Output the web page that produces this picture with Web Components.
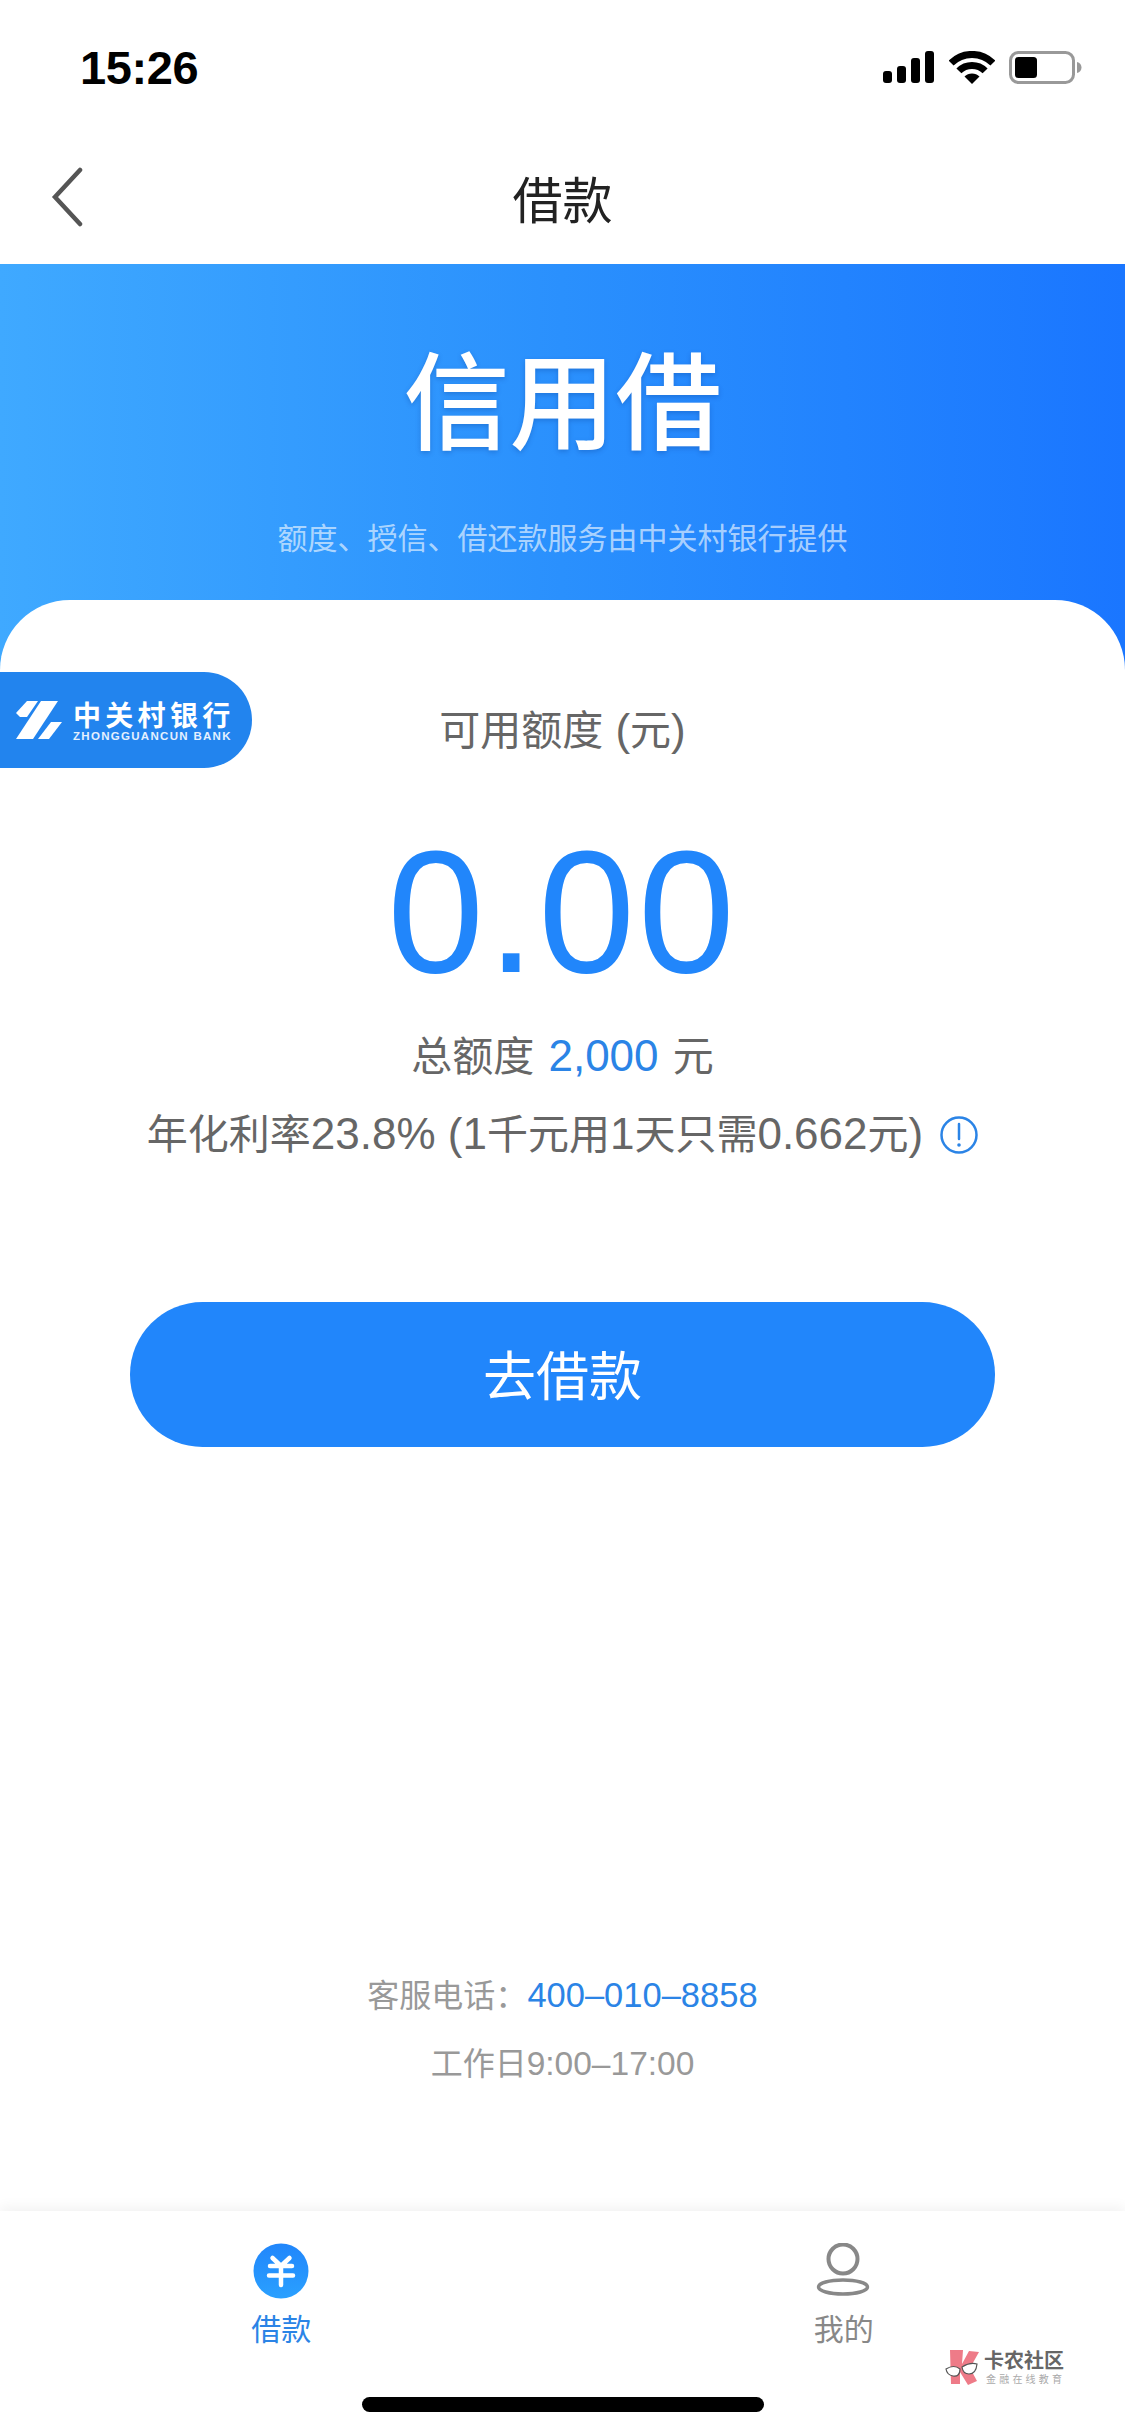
<!doctype html>
<html lang="zh-CN"><head><meta charset="utf-8"><title>借款</title>
<style>
html,body{margin:0;padding:0;background:#fff}
body{width:1125px;height:2436px;overflow:hidden;font-family:"Liberation Sans","Noto Sans CJK SC",sans-serif}
app-shell{font-family:"Liberation Sans","Noto Sans CJK SC",sans-serif}
</style></head><body>
<app-shell>
  <status-bar></status-bar>
  <nav-bar>借款</nav-bar>
  <hero-banner></hero-banner>
  <credit-panel></credit-panel>
  <tab-bar></tab-bar>
  <kanong-mark></kanong-mark>
</app-shell>
<script>
function def(name, html){
  customElements.define(name, class extends HTMLElement{
    constructor(){super();const r=this.attachShadow({mode:'open'});r.innerHTML=html;}
  });
}
def('app-shell',`<style>:host{display:flex;flex-direction:column;width:1125px;height:2436px;position:relative;overflow:hidden;background:#fff}</style><slot></slot>`);

def('status-bar',`<style>
:host{display:flex;height:130px;box-sizing:border-box;padding:45px 43px 0 80px;justify-content:space-between;align-items:flex-start;background:#fff}
.t{font:700 47px/46px "Liberation Sans",sans-serif;color:#000;letter-spacing:-.4px}
.i{display:flex;align-items:center;height:46px;gap:14px;margin-top:-1px}
svg{display:block}
</style>
<div class="t">15:26</div>
<div class="i">
<svg width="51" height="33" viewBox="0 0 51 33"><g fill="#000"><rect x="0" y="20" width="9" height="12" rx="3"/><rect x="14" y="15" width="9" height="17" rx="3"/><rect x="28" y="7" width="9" height="25" rx="3"/><rect x="42" y="0" width="9" height="32" rx="3"/></g></svg>
<svg width="46" height="33" viewBox="0 0 46 33" style="margin-left:1px"><path d="M2.100 12.100A29.500 29.500 0 0 1 43.900 12.100" fill="none" stroke="#000" stroke-width="7"/><path d="M9.900 19.900A18.500 18.500 0 0 1 36.100 19.900" fill="none" stroke="#000" stroke-width="7"/><path d="M23 33L15.500 25.500A10.600 10.600 0 0 1 30.500 25.500Z" fill="#000"/></svg>
<svg width="73" height="33" viewBox="0 0 73 33"><rect x="1.500" y="1.500" width="63" height="30" rx="8" fill="none" stroke="#999" stroke-width="3"/><rect x="6" y="6" width="22" height="21" rx="3.500" fill="#000"/><path d="M68 11c3 .5 4.500 3 4.500 5.500S71 21.500 68 22Z" fill="#999"/></svg>
</div>`);

def('nav-bar',`<style>
:host{display:flex;position:relative;height:134px;align-items:center;justify-content:center;background:#fff;font:400 50px/60px "Noto Sans CJK SC",sans-serif;color:#222}
svg{position:absolute;left:50px;top:37px}
</style>
<svg width="34" height="60" viewBox="0 0 34 60"><path d="M30 3L5 30l25 27" fill="none" stroke="#555" stroke-width="4.500" stroke-linecap="round" stroke-linejoin="miter"/></svg>
<slot></slot>`);

def('hero-banner',`<style>
:host{display:flex;flex-direction:column;align-items:center;height:406px;box-sizing:border-box;padding-top:76px;background:linear-gradient(90deg,#3fa9ff 0%,#2a90fd 50%,#1a76ff 100%);flex:none}
.logo{font:500 106px/110px "Noto Sans CJK SC",sans-serif;color:#fff;text-shadow:0 2px 5px rgba(0,40,120,.25)}
.sub{margin-top:66px;font:400 30px/40px "Noto Sans CJK SC",sans-serif;color:rgba(255,255,255,.62)}
</style>
<div class="logo">信用借</div>
<div class="sub">额度、授信、借还款服务由中关村银行提供</div>`);

def('bank-badge',`<style>
:host{display:flex;position:absolute;left:0;top:72px;width:252px;height:96px;box-sizing:border-box;padding-left:16px;align-items:center;gap:11px;background:#2284ee;border-radius:0 48px 48px 0;color:#fff}
svg{display:block;flex:none}
.n{font:700 28px/30px "Noto Sans CJK SC",sans-serif;letter-spacing:4.300px;white-space:nowrap}
.e{font:700 11.500px/13px "Liberation Sans",sans-serif;letter-spacing:1.300px;white-space:nowrap;margin-top:1px;color:#e4f0ff}
.w{display:flex;flex-direction:column;margin-top:2px}
</style>
<svg width="46" height="39" viewBox="0 0 46 39"><g fill="#fff"><path d="M0 12L11 0H22L11 16H4Z"/><path d="M25 0H42L17 38H0Z"/><path d="M35 21H46L33 38H22Z"/></g></svg>
<div class="w"><div class="n">中关村银行</div><div class="e">ZHONGGUANCUN BANK</div></div>`);

def('credit-panel',`<style>
:host{display:flex;flex-direction:column;align-items:center;flex:1;position:relative;margin-top:-70px;padding-top:106px;background:#fff;border-radius:70px 70px 0 0;color:#666;font:400 41px/50px "Liberation Sans","Noto Sans CJK SC",sans-serif}
i{font-style:normal;font-size:44px;line-height:0}
.big{margin-top:56px;font:400 174px/200px "Liberation Sans",sans-serif;letter-spacing:3px;color:#2186fb}
.b{color:#2b84e6}
.total{margin-top:20px;white-space:pre;word-spacing:2px}
.rate{margin-top:28px;display:flex;align-items:center;gap:17px;white-space:pre}
.rate svg{display:block}
.btn{margin-top:142px;width:865px;height:145px;border-radius:73px;background:#2186fb;color:#fff;display:flex;align-items:center;justify-content:center;font:400 53px/60px "Noto Sans CJK SC",sans-serif;padding-bottom:3px;box-sizing:border-box}
.foot{margin-top:527px;font-size:32px;line-height:44px;color:#999;white-space:pre}
.foot+.foot{margin-top:24px}
.ph{font-size:34.500px;line-height:0}
.tm{font-size:33.500px;line-height:0}
</style>
<bank-badge></bank-badge>
<div>可用额度<i> (</i>元<i>)</i></div>
<div class="big">0.00</div>
<div class="total">总额度<i> </i><i class="b">2,000</i><i> </i>元</div>
<div class="rate"><span>年化利率<i>23.8% (1</i>千元用<i>1</i>天只需<i>0.662</i>元<i>)</i></span><svg width="38" height="38" viewBox="0 0 38 38"><circle cx="19" cy="19" r="17.500" fill="none" stroke="#2b84e6" stroke-width="2.500"/><path d="M19 8v15" stroke="#2b84e6" stroke-width="2.500" stroke-linecap="round"/><circle cx="19" cy="29" r="1.800" fill="#2b84e6"/></svg></div>
<div class="btn">去借款</div>
<div class="foot">客服电话：<span class="b ph">400–010–8858</span></div>
<div class="foot">工作日<span class="tm">9:00–17:00</span></div>`);

def('tab-item',`<style>
:host{display:flex;flex-direction:column;align-items:center;color:#888;font:400 30px/36px "Noto Sans CJK SC",sans-serif}
:host([active]){color:#2b84e6}
.ic{height:56px;margin-bottom:10px}
</style>
<div class="ic"><slot name="icon"></slot></div><slot></slot>`);

def('kanong-mark',`<style>
:host{display:flex;position:absolute;left:945px;top:2349px;gap:5px;align-items:center}
svg{display:block}
.a{font:700 20px/22px "Noto Sans CJK SC",sans-serif;color:#666;white-space:nowrap}
.c{font:400 10px/14px "Noto Sans CJK SC",sans-serif;color:#aaa;letter-spacing:3.200px;white-space:nowrap;margin-left:2px;margin-top:1px}
</style>
<svg width="34" height="35" viewBox="0 0 34 35"><path d="M5 0H18L17 14L24 1L34 2L25 18L32 31L23 35L15 22V34H6Z" fill="#ee7b88"/><path d="M1 19Q9 14 15 19Q15 27 8 26Q2 25 1 19ZM17 17Q25 12 32 14Q31 24 24 24Q18 24 17 17Z" fill="#fff" stroke="#555" stroke-width="1.200"/></svg>
<div><div class="a">卡农社区</div><div class="c">金融在线教育</div></div>`);

def('tab-bar',`<style>
:host{display:flex;flex-direction:column;align-items:center;height:225px;box-sizing:border-box;padding-top:32px;background:#fff;box-shadow:0 -4px 12px rgba(0,0,0,.055);position:relative;flex:none}
.row{display:grid;grid-template-columns:1fr 1fr;width:100%}
.hi{width:402px;height:15px;border-radius:8px;background:#000;margin-top:52px}
svg{display:block}
</style>
<div class="row">
<tab-item active><svg slot="icon" width="56" height="56" viewBox="0 0 56 56"><defs><linearGradient id="g" x1="0" y1="0" x2="0" y2="1"><stop offset="0" stop-color="#2186fb"/><stop offset="1" stop-color="#2aa0ff"/></linearGradient></defs><circle cx="28" cy="28" r="27.500" fill="url(#g)"/><path d="M19.500 15l8.500 8 8.500-8M17 23h22M16 32.500h24M28 23v19" fill="none" stroke="#fff" stroke-width="4.500" stroke-linecap="round" stroke-linejoin="round"/></svg>借款</tab-item>
<tab-item><svg slot="icon" width="56" height="56" viewBox="0 0 56 56"><circle cx="27" cy="16" r="14.500" fill="none" stroke="#888" stroke-width="4"/><ellipse cx="27" cy="44" rx="24.500" ry="7" fill="none" stroke="#888" stroke-width="3.500"/></svg>我的</tab-item>
</div>
<div class="hi"></div>`);
</script>
</body></html>
